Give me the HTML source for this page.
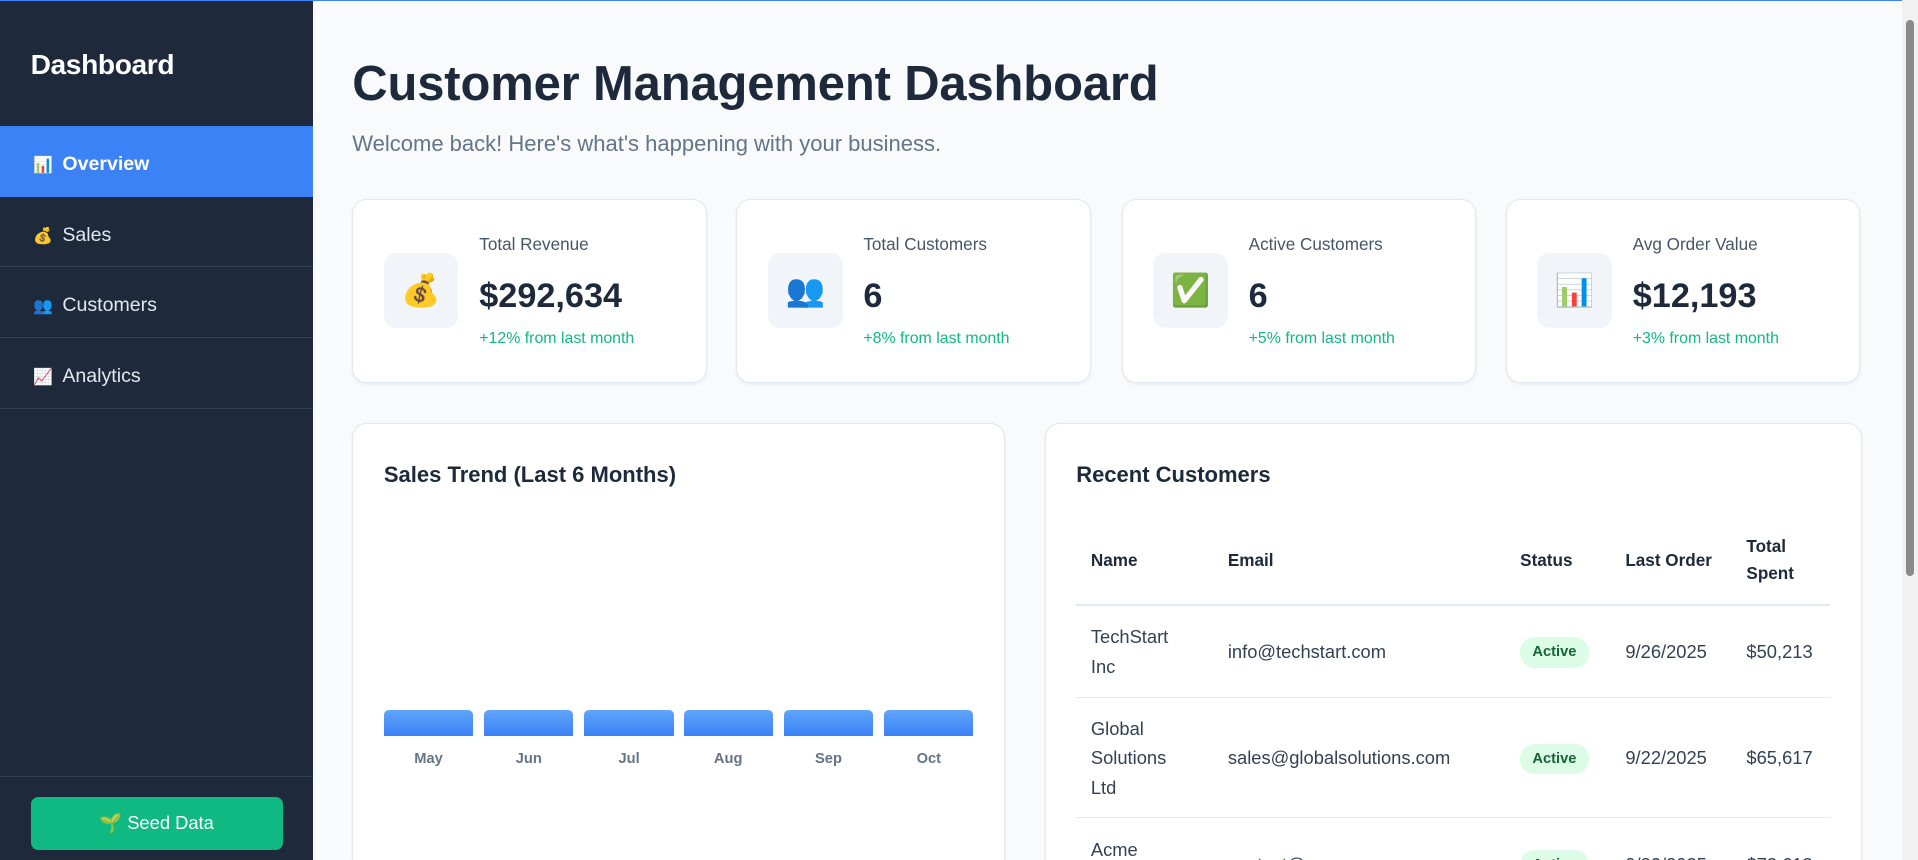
<!DOCTYPE html>
<html><head><meta charset="utf-8"><style>
html,body{margin:0;padding:0;overflow:hidden}
body{zoom:1.2232;width:1568px;height:703px;background:#f8fafc;font-family:"Liberation Sans","Noto Sans CJK SC",sans-serif;position:relative;color:#1e293b}
.topline{position:absolute;left:0;top:0;width:1555px;height:1px;background:#3b82f6;z-index:5}
.side{position:absolute;left:0;top:0;width:256px;height:703px;background:#1e293b}
.side h2{margin:0;position:absolute;left:25px;top:40px;font-size:23px;font-weight:bold;color:#fff;letter-spacing:-0.3px}
.nav{position:absolute;top:103px;left:0;width:256px}
.nav div{height:57px;line-height:63px;padding-left:27px;color:#e2e8f0;font-size:16px;border-bottom:1px solid #334155;box-sizing:content-box}
.nav div.act{background:#3b82f6;color:#fff;font-weight:bold;border-bottom:1px solid #3b82f6}
.ic{display:inline-block;width:15px;font-size:13px;margin-right:9px}
.sbot{position:absolute;left:0;top:634px;width:256px;border-top:1px solid #334155}
.btn{position:absolute;left:25px;top:17px;width:206px;height:43px;background:#10b981;border-radius:6px;color:#fff;font-size:15px;text-align:center;line-height:43px}
.main{position:absolute;left:288px;top:0}
h1{margin:0;position:absolute;top:46px;left:0;font-size:40px;font-weight:bold;white-space:nowrap;color:#1e293b;letter-spacing:-0.1px}
.sub{position:absolute;top:107px;left:0;font-size:18px;color:#64748b;white-space:nowrap}
.card{position:absolute;background:#fff;border:1px solid #e2e8f0;border-radius:12px;box-shadow:0 1px 3px rgba(0,0,0,.06);box-sizing:border-box;overflow:hidden}
.stat{top:163px;width:290px;height:150px}
.ibox{position:absolute;left:25px;top:43px;width:61px;height:61px;background:#f1f5f9;border-radius:10px;text-align:center;line-height:61px;font-size:26px}
.lbl{position:absolute;left:103px;top:28px;font-size:14px;color:#475569;white-space:nowrap}
.val{position:absolute;left:103px;top:63px;font-size:28px;font-weight:bold;color:#1e293b;white-space:nowrap}
.chg{position:absolute;left:103px;top:106px;font-size:13px;color:#10b981;white-space:nowrap}
.ct{position:absolute;left:25px;top:31px;font-size:18px;font-weight:bold;color:#1e293b;white-space:nowrap}
.bar{position:absolute;top:234px;width:73px;height:21px;background:linear-gradient(#60a5fa,#3b82f6);border-radius:4px 4px 0 0}
.bl{position:absolute;top:267px;width:73px;text-align:center;font-size:12px;color:#64748b;font-weight:bold}
table{position:absolute;left:25px;top:77px;width:616px;border-collapse:collapse;font-size:15px}
th{text-align:left;font-size:14px;font-weight:bold;color:#1e293b;padding:0 12px;height:70px;border-bottom:2px solid #e2e8f0;line-height:22px}
td{padding:0 12px;color:#334155;border-bottom:1px solid #e2e8f0;line-height:24px}
.pill{display:inline-block;background:#dcfce7;color:#166534;font-size:12px;font-weight:bold;border-radius:12px;padding:0 10px;line-height:25px}
.sb{position:absolute;left:1555px;top:0;width:13px;height:703px;background:#f1f1f1}
.th{position:absolute;left:3px;top:16px;width:7px;height:455px;background:#8a8a8a;border-radius:4px}
</style></head><body>
<div class="topline"></div>
<div class="side">
<h2>Dashboard</h2>
<div class="nav">
<div class="act"><span class="ic">📊</span>Overview</div>
<div><span class="ic">💰</span>Sales</div>
<div><span class="ic">👥</span>Customers</div>
<div><span class="ic">📈</span>Analytics</div>
</div>
<div class="sbot"><div class="btn">🌱 Seed Data</div></div>
</div>
<div class="main">
<h1>Customer Management Dashboard</h1>
<div class="sub">Welcome back! Here's what's happening with your business.</div>
</div>
<div class="card stat" style="left:288px"><div class="ibox">💰</div><div class="lbl">Total Revenue</div><div class="val">$292,634</div><div class="chg">+12% from last month</div></div>
<div class="card stat" style="left:602px"><div class="ibox">👥</div><div class="lbl">Total Customers</div><div class="val">6</div><div class="chg">+8% from last month</div></div>
<div class="card stat" style="left:917px"><div class="ibox">✅</div><div class="lbl">Active Customers</div><div class="val">6</div><div class="chg">+5% from last month</div></div>
<div class="card stat" style="left:1231px"><div class="ibox">📊</div><div class="lbl">Avg Order Value</div><div class="val">$12,193</div><div class="chg">+3% from last month</div></div>

<div class="card" style="left:288px;top:346px;width:534px;height:357px;border-bottom:none;border-radius:12px 12px 0 0">
<div class="ct">Sales Trend (Last 6 Months)</div>
<div class="bar" style="left:25px"></div><div class="bl" style="left:25px">May</div>
<div class="bar" style="left:107px"></div><div class="bl" style="left:107px">Jun</div>
<div class="bar" style="left:189px"></div><div class="bl" style="left:189px">Jul</div>
<div class="bar" style="left:270px"></div><div class="bl" style="left:270px">Aug</div>
<div class="bar" style="left:352px"></div><div class="bl" style="left:352px">Sep</div>
<div class="bar" style="left:434px"></div><div class="bl" style="left:434px">Oct</div>
</div>

<div class="card" style="left:854px;top:346px;width:668px;height:357px;border-bottom:none;border-radius:12px 12px 0 0">
<div class="ct">Recent Customers</div>
<table>
<tr><th style="width:88px">Name</th><th style="width:215px">Email</th><th style="width:62px">Status</th><th style="width:75px">Last Order</th><th>Total<br>Spent</th></tr>
<tr style="height:76px"><td>TechStart<br>Inc</td><td>info@techstart.com</td><td><span class="pill">Active</span></td><td>9/26/2025</td><td>$50,213</td></tr>
<tr style="height:98px"><td>Global<br>Solutions<br>Ltd</td><td>sales@globalsolutions.com</td><td><span class="pill">Active</span></td><td>9/22/2025</td><td>$65,617</td></tr>
<tr style="height:76px"><td>Acme<br>Corp</td><td>contact@acme.com</td><td><span class="pill">Active</span></td><td>9/20/2025</td><td>$72,613</td></tr>
</table>
</div>
<div class="sb"><div class="th"></div></div>
</body></html>
